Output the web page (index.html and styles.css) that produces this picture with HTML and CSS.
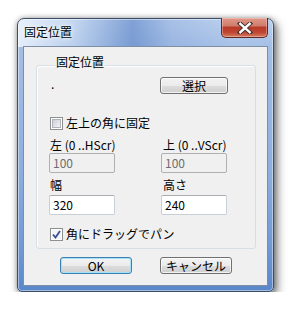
FILE: index.html
```html
<!DOCTYPE html>
<html lang="ja">
<head>
<meta charset="utf-8">
<link rel="stylesheet" href="styles.css">
</head>
<body>
<div class="window">
  <div class="titlebar">
    <span class="title">固定位置</span>
    <div class="close">
      <svg width="16" height="12" viewBox="0 0 16 12">
        <path d="M3 1.5 L13 10.5 M13 1.5 L3 10.5" stroke="#3a2a2a" stroke-width="4.2" stroke-linecap="square" fill="none"/>
        <path d="M3.3 1.8 L12.7 10.2 M12.7 1.8 L3.3 10.2" stroke="#ffffff" stroke-width="2.4" stroke-linecap="square" fill="none"/>
      </svg>
    </div>
  </div>
  <div class="client">
    <div class="group">
      <div class="legend">固定位置</div>
      <div class="grid">
        <div class="dot">.</div>
        <div class="btn btn-select">選択</div>

        <label class="check span2 row-check1"><span class="box"><span class="inner"></span></span>左上の角に固定</label>

        <div class="lbl row-lbl1">左 (0 ..HScr)</div>
        <div class="lbl lbl-r row-lbl1">上 (0 ..VScr)</div>

        <div class="field disabled">100</div>
        <div class="field disabled">100</div>

        <div class="lbl row-lbl2">幅</div>
        <div class="lbl lbl-r row-lbl2">高さ</div>

        <div class="field">320</div>
        <div class="field">240</div>

        <label class="check span2 row-check2"><span class="box checked"><span class="inner"><svg width="9" height="9" viewBox="0 0 9 9"><path d="M1 4.5 L3.5 7.5 L8 1" stroke="#3a4f8f" stroke-width="1.8" fill="none"/></svg></span></span>角にドラッグでパン</label>
      </div>
    </div>
    <div class="buttons">
      <div class="btn btn-default">OK</div>
      <div class="btn">キャンセル</div>
    </div>
  </div>
</div>
</body>
</html>
```
FILE: styles.css
```css
html, body {
  margin: 0;
  padding: 0;
  background: #ffffff;
}
body {
  padding: 18px 0 0 17px;
  font-family: "Noto Sans CJK JP", "Liberation Sans", sans-serif;
  font-size: 12px;
  line-height: 14px;
  color: #000;
}
.window {
  box-sizing: border-box;
  width: 257px;
  height: 274px;
  border: 1px solid #3d4e68;
  border-radius: 7px 7px 5px 5px;
  padding: 0 5px 5px 5px;
  display: flex;
  flex-direction: column;
  background:
    linear-gradient(90deg, rgba(236,243,252,0.9) 0, rgba(205,222,243,0.5) 22%, rgba(90,130,198,0.6) 45%, rgba(130,162,215,0.35) 60%, rgba(190,210,240,0.15) 85%, rgba(0,0,0,0) 100%) top / 100% 28px no-repeat,
    linear-gradient(to bottom, #bcd1ee 0, #a4bfe6 28px, #8eaedf 55%, #6f98d3 85%, #5a87c9 100%);
  box-shadow: 3px 4px 10px rgba(0,0,0,0.55), 0 0 5px rgba(0,0,0,0.3), inset 0 0 0 1px rgba(255,255,255,0.45);
}
.titlebar {
  height: 27px;
  display: flex;
  align-items: flex-start;
}
.title {
  padding: 6px 0 0 1px;
  text-shadow: 0 0 6px #ffffff, 0 0 3px #ffffff;
}
.close {
  margin-left: auto;
  margin-top: -1px;
  width: 47px;
  height: 20px;
  box-sizing: border-box;
  border: 1px solid #5e2a22;
  border-top: 0;
  border-radius: 0 0 5px 5px;
  background: linear-gradient(to bottom, #e0988a 0, #d07d6c 40%, #b93a28 50%, #c04532 75%, #d47a60 100%);
  box-shadow: inset 0 0 0 1px rgba(255,220,210,0.4);
  display: flex;
  align-items: center;
  justify-content: center;
}
.client {
  flex: 1;
  border: 1px solid #7d8ea5;
  background: #f0f0f0;
  display: flex;
  flex-direction: column;
}
.group {
  box-sizing: border-box;
  width: 220px;
  margin: 18px 0 0 12px;
  border: 1px solid #d5dfe5;
  border-radius: 3px;
  box-shadow: inset 1px 1px 0 #ffffff;
  padding: 0 0 7px 12px;
}
.legend {
  width: fit-content;
  margin: -11px 0 0 6px;
  padding: 0 1px;
  background: #f0f0f0;
}
.grid {
  display: grid;
  grid-template-columns: 112px 66px;
  align-items: start;
  margin-top: 8px;
}
.dot {
  padding-left: 2px;
}
.span2 {
  grid-column: 1 / 3;
}
.btn {
  box-sizing: border-box;
  height: 17px;
  border: 1px solid #707070;
  border-radius: 3px;
  background: linear-gradient(to bottom, #f3f3f3 0, #ebebeb 50%, #dddddd 51%, #cfcfcf 100%);
  box-shadow: inset 0 0 0 1px rgba(255,255,255,0.7);
  text-align: center;
  line-height: 15px;
}
.btn-select {
  width: 68px;
  margin-left: -1px;
}
.check {
  display: flex;
  align-items: center;
  gap: 3px;
  height: 14px;
}
.row-check1 { margin-top: 22px; }
.row-check2 { margin-top: 12px; }
.box {
  box-sizing: border-box;
  width: 13px;
  height: 13px;
  margin-left: 1px;
  border: 1px solid #8e8f8f;
  background: #ffffff;
  display: flex;
  align-items: center;
  justify-content: center;
}
.inner {
  box-sizing: border-box;
  width: 9px;
  height: 9px;
  border: 1px solid #aeb3b9;
  background: linear-gradient(135deg, #cbcfd5 0, #e2e4e7 60%, #f4f4f4 100%);
  display: flex;
  align-items: center;
  justify-content: center;
}
.checked .inner {
  border: 0;
  background: #f4f5f8;
}
.lbl {
  padding-left: 1px;
}
.lbl-r {
  padding-left: 2px;
}
.row-lbl1 { margin-top: 8px; }
.row-lbl2 { margin-top: 5px; }
.field {
  box-sizing: border-box;
  width: 66px;
  height: 20px;
  border: 1px solid #c9ced4;
  border-top-color: #abadb3;
  border-radius: 2px;
  background: #ffffff;
  padding-left: 3px;
  line-height: 18px;
  margin-top: 3px;
}
.field.disabled {
  margin-top: 1px;
  background: #f0f0f0;
  border-color: #b0b0b0;
  color: #6d6d6d;
}
.buttons {
  display: flex;
  gap: 28px;
  padding-left: 36px;
  margin-top: 8px;
}
.buttons .btn {
  width: 72px;
}
.btn-default {
  border-color: #3c7fb1;
  box-shadow: inset 0 0 0 1px #a6e1f9;
}
```
